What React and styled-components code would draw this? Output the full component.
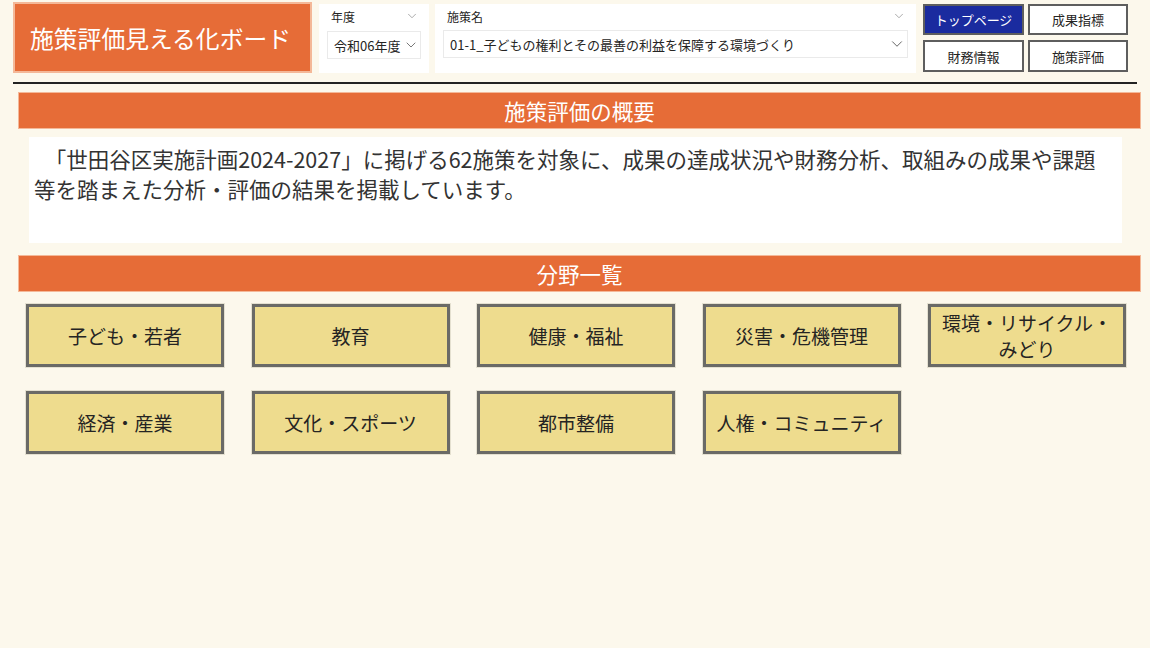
import styled, { createGlobalStyle } from "styled-components";
import { ChevronDown } from "lucide-react";

const GlobalStyle = createGlobalStyle`
  html, body {
    margin: 0;
    padding: 0;
    background: #fcf8ec;
  }
  body {
    font-family: "Noto Sans CJK JP", "Noto Sans", sans-serif;
    color: #252423;
  }
`;

const orange = "#e66c37";

const Page = styled.div`
  width: 1150px;
  height: 648px;
  background: #fcf8ec;
  padding: 2px 0 0 13px;
  box-sizing: border-box;
  overflow: hidden;
`;

const TopBar = styled.div`
  display: flex;
  align-items: flex-start;
  height: 72px;
`;

const TitleBox = styled.div`
  width: 299px;
  height: 71px;
  box-sizing: border-box;
  background: ${orange};
  border: 2px solid #f4b898;
  color: #fff;
  font-size: 23.8px;
  display: flex;
  align-items: center;
  padding-left: 15px;
`;

const Slicer = styled.div`
  width: ${(p) => p.$w}px;
  height: 69px;
  margin: 2px 0 0 ${(p) => p.$gap}px;
  background: #fff;
  box-sizing: border-box;
  padding: 2px 8px 0 8px;
  display: flex;
  flex-direction: column;
`;

const SlicerHead = styled.div`
  display: flex;
  justify-content: space-between;
  align-items: center;
  font-size: 12px;
  height: 20px;
  padding: 0 2px 0 4px;
  color: #252423;
  svg {
    color: #888;
  }
`;

const DropBox = styled.div`
  margin-top: ${(p) => p.$top}px;
  height: 28px;
  border: 1px solid #eaeaea;
  box-sizing: border-box;
  display: flex;
  align-items: center;
  justify-content: space-between;
  padding: 0 1px 0 6px;
  font-size: 13px;
  white-space: nowrap;
  svg {
    color: #555;
  }
`;

const NavGrid = styled.div`
  margin: 2px 0 0 7px;
  display: grid;
  grid-template-columns: 101px 100px;
  grid-template-rows: 31px 32px;
  column-gap: 4px;
  row-gap: 5px;
`;

const NavButton = styled.div`
  box-sizing: border-box;
  border: 2px solid #5e5e5e;
  background: ${(p) => (p.$active ? "#1a2b9f" : "#fff")};
  color: ${(p) => (p.$active ? "#fff" : "#252423")};
  font-size: 13px;
  display: flex;
  align-items: center;
  justify-content: center;
`;

const Rule = styled.div`
  width: 1124px;
  height: 2px;
  background: #222;
  margin-top: 8px;
`;

const SectionHead = styled.div`
  width: 1123px;
  height: 37px;
  box-sizing: border-box;
  margin: ${(p) => p.$top}px 0 0 5px;
  background: ${orange};
  border: 1px solid #f4b898;
  color: #fff;
  font-size: 21.5px;
  display: flex;
  align-items: center;
  justify-content: center;
`;

const Summary = styled.div`
  width: 1093px;
  height: 106px;
  box-sizing: border-box;
  margin: 8px 0 0 16px;
  background: #fff;
  padding: 7px 12px 0 5px;
  font-size: 21.5px;
  line-height: 30px;
  color: #333;
`;

const Tiles = styled.div`
  margin: 12px 0 0 13px;
  display: grid;
  grid-template-columns: repeat(5, 198px);
  grid-auto-rows: 63px;
  column-gap: 27.5px;
  row-gap: 24px;
`;

const Tile = styled.div`
  box-sizing: border-box;
  background: #eedc8e;
  border: 3px solid #6a6a66;
  box-shadow: 0 0 0 1px #e4e0d0;
  font-size: 19px;
  line-height: 26px;
  color: #252423;
  display: flex;
  align-items: center;
  justify-content: center;
  text-align: center;
  padding: 0 6px;
`;

const fields = [
  "子ども・若者",
  "教育",
  "健康・福祉",
  "災害・危機管理",
  "環境・リサイクル・みどり",
  "経済・産業",
  "文化・スポーツ",
  "都市整備",
  "人権・コミュニティ",
];

const App = () => {
  return (
    <Page>
      <GlobalStyle />
      <TopBar>
        <TitleBox>施策評価見える化ボード</TitleBox>
        <Slicer $w={110} $gap={7}>
          <SlicerHead>
            <span>年度</span>
            <ChevronDown size={14} strokeWidth={1.2} />
          </SlicerHead>
          <DropBox $top={5}>
            <span>令和06年度</span>
            <ChevronDown size={16} strokeWidth={1.2} />
          </DropBox>
        </Slicer>
        <Slicer $w={481} $gap={6}>
          <SlicerHead>
            <span>施策名</span>
            <ChevronDown size={14} strokeWidth={1.2} />
          </SlicerHead>
          <DropBox $top={4}>
            <span>01-1_子どもの権利とその最善の利益を保障する環境づくり</span>
            <ChevronDown size={18} strokeWidth={1.2} />
          </DropBox>
        </Slicer>
        <NavGrid>
          <NavButton $active>トップページ</NavButton>
          <NavButton>成果指標</NavButton>
          <NavButton>財務情報</NavButton>
          <NavButton>施策評価</NavButton>
        </NavGrid>
      </TopBar>
      <Rule />
      <SectionHead $top={8}>施策評価の概要</SectionHead>
      <Summary>
        {"\u3000「世田谷区実施計画2024-2027」に掲げる62施策を対象に、成果の達成状況や財務分析、取組みの成果や課題等を踏まえた分析・評価の結果を掲載しています。"}
      </Summary>
      <SectionHead $top={12}>分野一覧</SectionHead>
      <Tiles>
        {fields.map((f) => (
          <Tile key={f}>{f}</Tile>
        ))}
      </Tiles>
    </Page>
  );
};

export default App;
